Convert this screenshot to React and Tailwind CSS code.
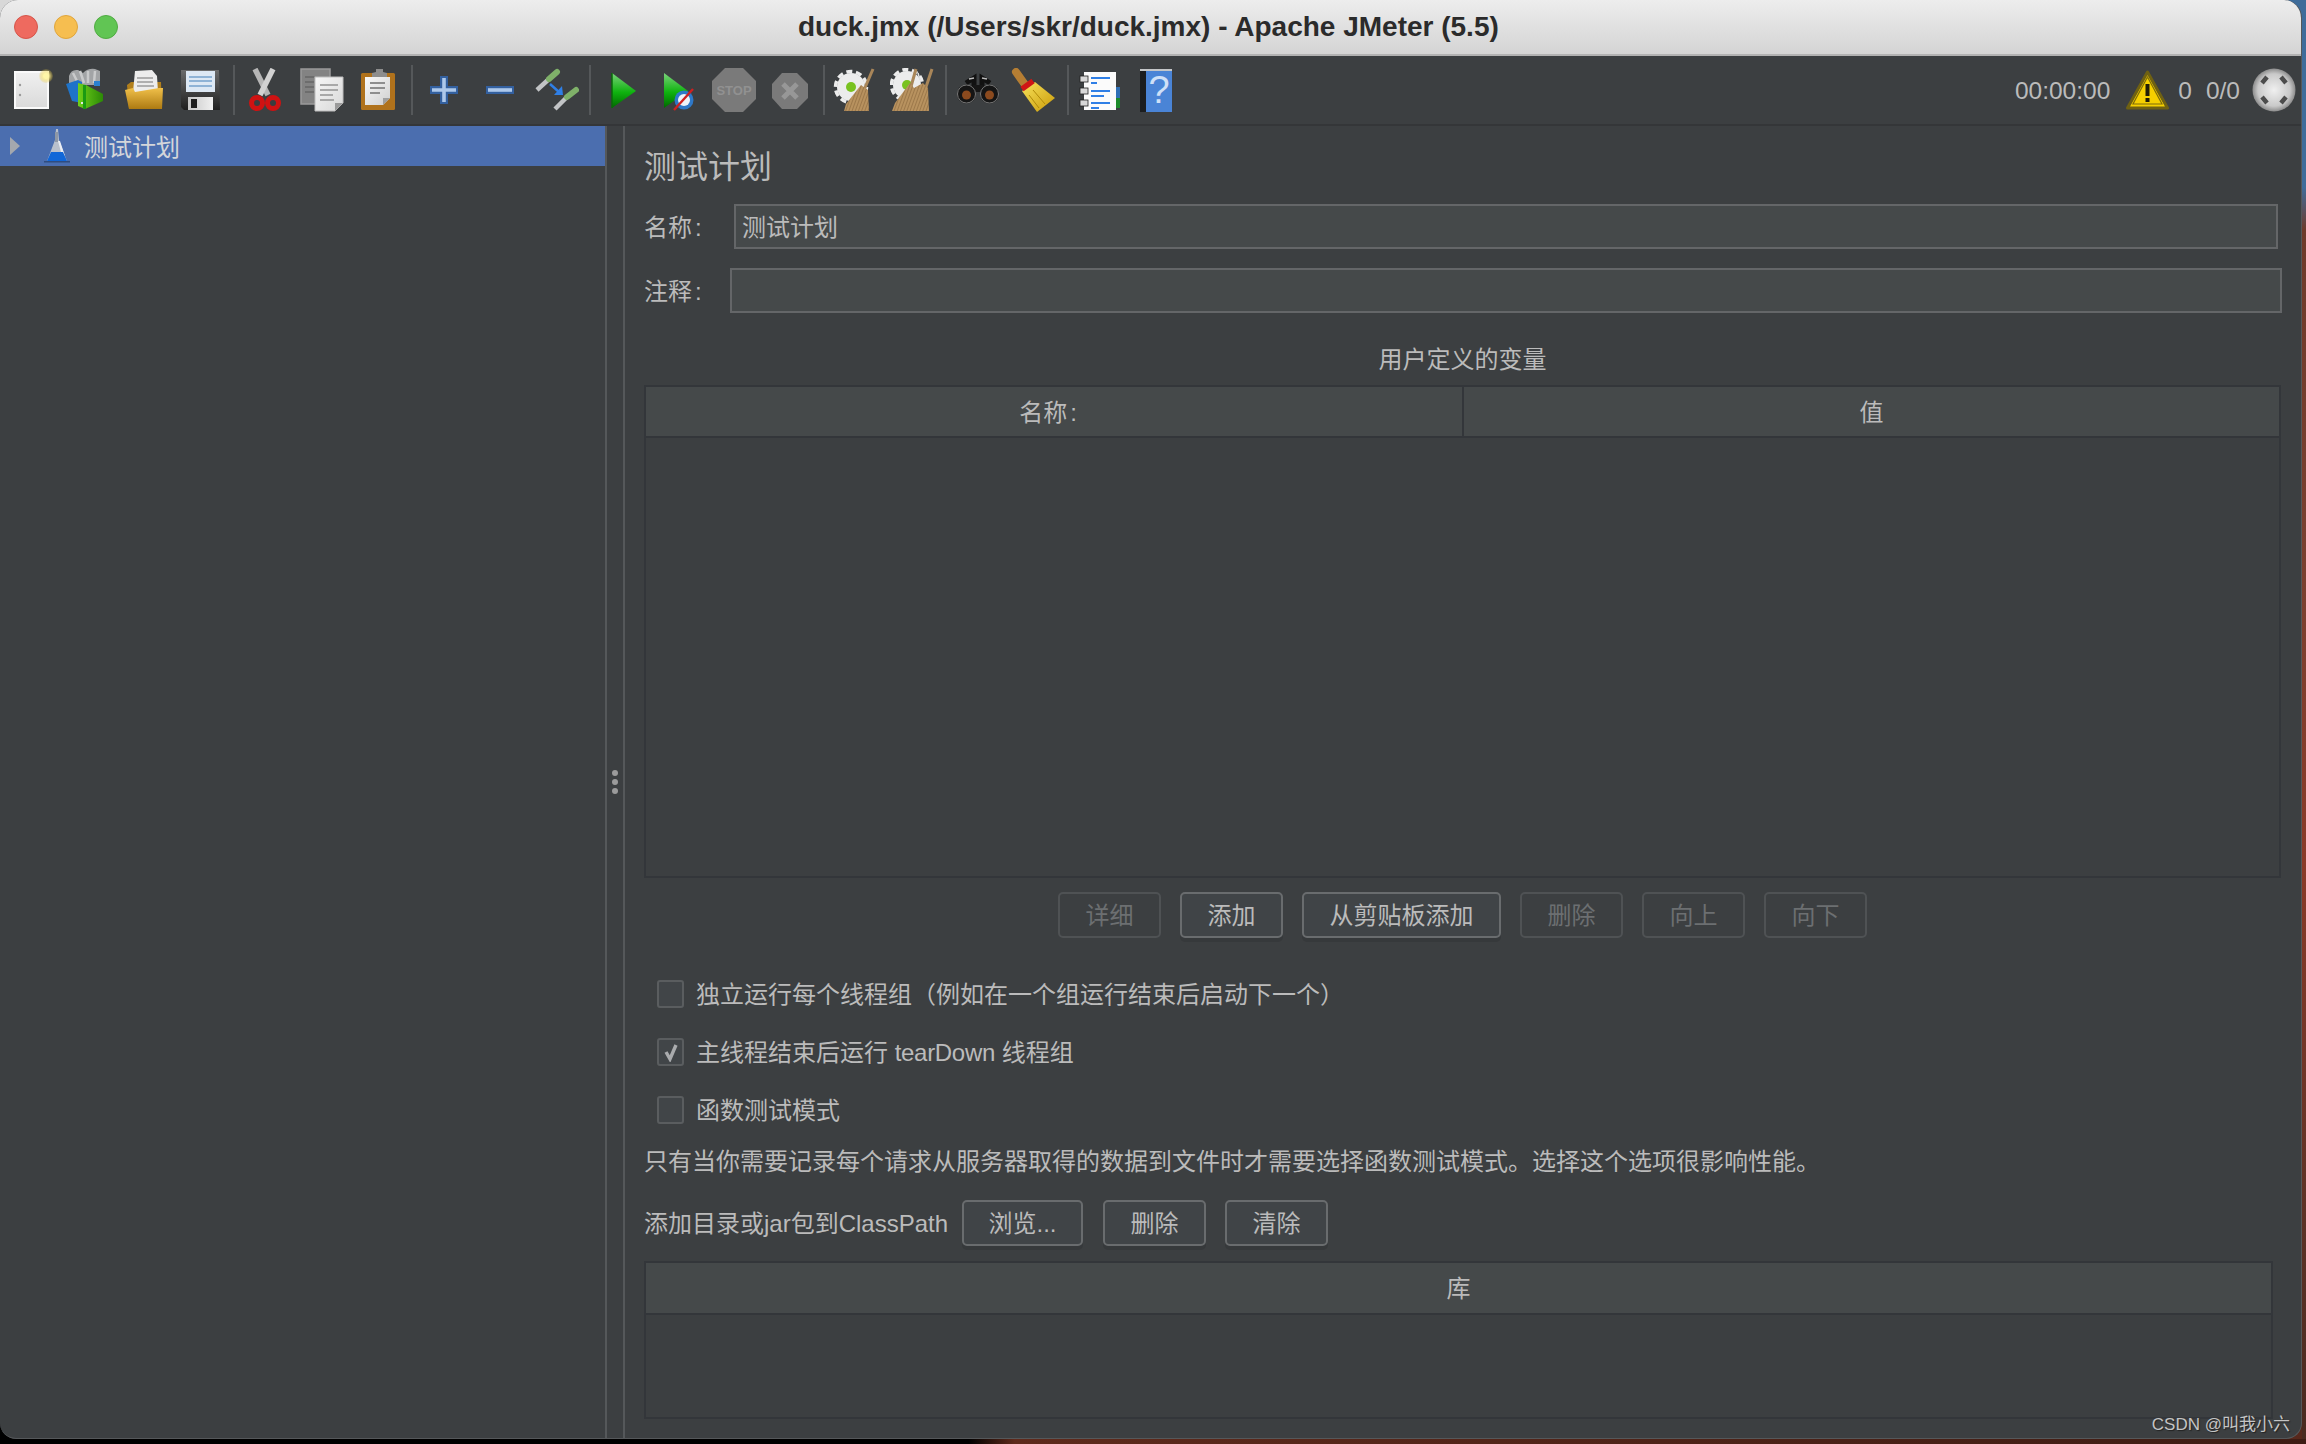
import React from "react";

const Slot = ({ className = "", children }) => (
  <svg viewBox="0 0 44 44" className={`w-11 h-11 shrink-0 ${className}`}>{children}</svg>
);
const Sep = ({ className = "" }) => <div className={`w-[2px] h-[50px] shrink-0 bg-[#55585a] ${className}`} />;

const Grad = ({ id, a, b, c, x2 = 0, y2 = 1 }) => (
  <linearGradient id={id} x1="0" y1="0" x2={x2} y2={y2}>
    <stop offset="0" stopColor={a} />
    {c ? <stop offset="0.55" stopColor={c} /> : null}
    <stop offset="1" stopColor={b} />
  </linearGradient>
);

const IconNew = (p) => (
  <Slot {...p}>
    <defs>
      <Grad id="nw" a="#f0f0f0" b="#dadada" />
      <radialGradient id="glow"><stop offset="0.35" stopColor="#fff6a8" /><stop offset="1" stopColor="#e8c840" stopOpacity="0.15" /></radialGradient>
    </defs>
    <rect x="5" y="4" width="33" height="36" fill="url(#nw)" stroke="#fafafa" strokeWidth="2" />
    <circle cx="10" cy="17" r="1.2" fill="#999" />
    <circle cx="10" cy="27" r="1.2" fill="#999" />
    <circle cx="36" cy="8" r="7" fill="url(#glow)" />
  </Slot>
);

const IconTemplates = (p) => (
  <Slot {...p}>
    <defs>
      <Grad id="tg" a="#6fd11a" b="#2c8a06" x2="1" y2="0" />
    </defs>
    <path d="M5 8 Q7 1 14 2 L19 5 Q24 0 31 1 L36 3 L36 17 L5 17 Z" fill="#a2a4a6" />
    <path d="M9 5 L14 15 M16 3 L20 15 M24 3 L24 15 M31 3 L30 15" stroke="#c9cacb" strokeWidth="2.5" fill="none" />
    <path d="M2 16 L14 12 L18 14 L18 35 L8 33 Z" fill="#1f73c8" />
    <path d="M30 13 L36 13 L36 18 L30 18 Z" fill="#2b80cf" />
    <path d="M14 15 L22 17 L39 26 L39 33 L21 41 L14 38 Z" fill="url(#tg)" />
    <rect x="19" y="17" width="3" height="24" fill="#1a9a12" />
    <rect x="17" y="34" width="2" height="2" fill="#e6e6e6" />
  </Slot>
);

const IconOpen = (p) => (
  <Slot {...p}>
    <defs>
      <Grad id="fo" a="#f0c04a" b="#ad7a12" />
    </defs>
    <path d="M4 17 L8 14 L38 14 L39 40 L6 41 Z" fill="#b17f1c" />
    <path d="M12 3 L29 2 L34 8 L35 24 L10 24 Z" fill="#ececec" />
    <path d="M14 10 L30 10 M14 14 L30 14 M14 18 L31 18" stroke="#9a9a9a" strokeWidth="1.4" />
    <path d="M2 22 L10 20 L12 24 L36 20 L40 20 L39 41 L6 41 Z" fill="url(#fo)" />
  </Slot>
);

const IconSave = (p) => (
  <Slot {...p}>
    <defs>
      <Grad id="sb" a="#6b6b6b" b="#1f1f1f" />
      <Grad id="ss" a="#c8c8c8" b="#f0f0f0" x2="1" y2="0" />
    </defs>
    <path d="M3 2 L41 2 L42 42 L6 42 L3 39 Z" fill="url(#sb)" />
    <rect x="8" y="3" width="29" height="21" fill="#dde8f4" />
    <path d="M11 9 L34 9 M11 13 L34 13 M11 18 L34 18" stroke="#8fb3d6" strokeWidth="1.8" />
    <rect x="10" y="29" width="25" height="13" fill="url(#ss)" />
    <rect x="13" y="31" width="6" height="9" fill="#1e1e1e" />
  </Slot>
);

const IconCut = (p) => (
  <Slot {...p}>
    <path d="M12 1 L25 27" stroke="#b6b6b6" strokeWidth="5.5" fill="none" />
    <path d="M30 1 L17 27" stroke="#d2d2d2" strokeWidth="5.5" fill="none" />
    <circle cx="14" cy="35" r="5.5" fill="#3a3d3f" stroke="#cf1212" strokeWidth="5" />
    <circle cx="30" cy="35" r="5.5" fill="#3a3d3f" stroke="#cf1212" strokeWidth="5" />
  </Slot>
);

const IconCopy = (p) => (
  <Slot {...p}>
    <defs><Grad id="cp" a="#f6f6f6" b="#d8d8d8" x2="1" y2="1" /></defs>
    <rect x="1" y="1" width="29" height="35" fill="#838383" stroke="#9a9a9a" strokeWidth="1.5" />
    <path d="M5 9 L14 9 M5 14 L14 14 M5 19 L14 19 M5 24 L14 24" stroke="#6d6d6d" strokeWidth="2" />
    <path d="M15 9 L43 9 L43 35 L35 43 L15 43 Z" fill="url(#cp)" stroke="#bdbdbd" strokeWidth="1" />
    <path d="M43 35 L35 35 L35 43 Z" fill="#9a9a9a" />
    <path d="M20 17 L38 17 M20 22 L38 22 M20 27 L33 27 M20 32 L34 32" stroke="#a8a8a8" strokeWidth="1.8" />
  </Slot>
);

const IconPaste = (p) => (
  <Slot {...p}>
    <defs><Grad id="pp" a="#f8f8f8" b="#d0d0d0" x2="1" y2="1" /></defs>
    <rect x="5" y="5" width="34" height="37" rx="1.5" fill="#b0721c" />
    <path d="M9 9 L34 9 L34 30 L27 37 L9 37 Z" fill="url(#pp)" />
    <path d="M34 30 L27 30 L27 37 Z" fill="#9f9f9f" />
    <path d="M14 15 L29 15 M14 20 L29 20 M14 25 L24 25" stroke="#8e8e8e" strokeWidth="1.8" />
    <path d="M16 9 L16 5 L20 4 L20 1 L27 1 L27 4 L31 5 L31 9 Z" fill="#8d8d8d" />
  </Slot>
);

const IconPlus = (p) => (
  <Slot {...p}>
    <path d="M8 22 L36 22 M22 8 L22 36" stroke="#33609f" strokeWidth="8" />
    <path d="M10 22 L34 22 M22 10 L22 34" stroke="#adc8ea" strokeWidth="3.6" />
  </Slot>
);

const IconMinus = (p) => (
  <Slot {...p}>
    <path d="M8 22 L36 22" stroke="#33609f" strokeWidth="8" />
    <path d="M10 22 L34 22" stroke="#adc8ea" strokeWidth="3.6" />
  </Slot>
);

const IconToggle = (p) => (
  <Slot {...p}>
    <path d="M2 22 L14 11" stroke="#c2c4c6" strokeWidth="4.5" />
    <path d="M14 11 L22 4" stroke="#7fb169" strokeWidth="6" strokeLinecap="round" />
    <path d="M20 41 L32 29" stroke="#c2c4c6" strokeWidth="4.5" />
    <path d="M32 29 L41 22" stroke="#7fb169" strokeWidth="6" strokeLinecap="round" />
    <path d="M15 16 L24 24" stroke="#2f7fe6" strokeWidth="2.5" />
    <path d="M28 27 L19 27 L27 18 Z" fill="#2f7fe6" />
  </Slot>
);

const IconPlay = (p) => (
  <Slot {...p}>
    <defs><Grad id="pl" a="#7ad27a" c="#0fb30f" b="#006800" /></defs>
    <path d="M10 5 L34 23 L10 40 Z" fill="url(#pl)" />
    <path d="M10 5 L10 40" stroke="#0a6a0a" strokeWidth="1.5" />
  </Slot>
);

const IconPlayNoTimer = (p) => (
  <Slot {...p}>
    <defs><Grad id="pn" a="#7ad27a" c="#0fb30f" b="#006800" /></defs>
    <path d="M7 5 L31 23 L7 40 Z" fill="url(#pn)" />
    <circle cx="27" cy="32" r="9.5" fill="#2e78c8" />
    <circle cx="27" cy="32" r="6" fill="#eef3fa" />
    <path d="M17 42 L36 21" stroke="#cf2020" strokeWidth="2.4" />
  </Slot>
);

const IconStop = (p) => (
  <Slot {...p}>
    <path d="M13 0 L31 0 L44 13 L44 31 L31 44 L13 44 L0 31 L0 13 Z" fill="#7a7a7a" />
    <text x="22" y="27" textAnchor="middle" fontSize="13" fontWeight="700" fill="#919191" className="font-['Liberation_Sans']">STOP</text>
  </Slot>
);

const IconShutdown = (p) => (
  <Slot {...p}>
    <path d="M14 5 L29 5 L40 16 L40 30 L29 41 L14 41 L4 30 L4 16 Z" fill="#7a7a7a" />
    <path d="M15 16 L29 30 M29 16 L15 30" stroke="#979797" strokeWidth="5" />
  </Slot>
);

const Gear = ({ cx, cy }) => (
  <g>
    <circle cx={cx} cy={cy} r="14" fill="#ececec" />
    <circle cx={cx} cy={cy} r="15.5" fill="none" stroke="#ececec" strokeWidth="3.5" strokeDasharray="6 3.7" />
    <circle cx={cx} cy={cy} r="5" fill="#79c21f" />
  </g>
);
const Bristle = ({ d, id }) => (
  <g>
    <defs>
      <pattern id={id} width="3" height="3" patternUnits="userSpaceOnUse" patternTransform="rotate(20)">
        <rect width="3" height="3" fill="#b8925f" />
        <rect width="1" height="3" fill="#9c784a" />
      </pattern>
    </defs>
    <path d={d} fill={`url(#${id})`} />
  </g>
);

const IconClear = (p) => (
  <Slot {...p}>
    <Gear cx={19} cy={19} />
    <path d="M41 1 L32 22" stroke="#a98659" strokeWidth="3" />
    <Bristle id="b1" d="M29 17 L36 22 L37 43 L12 43 L14 36 Z" />
  </Slot>
);

const IconClearAll = (p) => (
  <Slot {...p}>
    <Gear cx={17} cy={17} />
    <path d="M26 1 L20 22 M42 1 L35 22" stroke="#a98659" strokeWidth="3" />
    <Bristle id="b2" d="M20 15 L24 20 L33 15 L38 20 L39 43 L2 43 L5 35 Z" />
    <path d="M28 5 L30 12" stroke="#e0e0e0" strokeWidth="1.5" />
  </Slot>
);

const IconBinoculars = (p) => (
  <Slot {...p}>
    <path d="M10 15 L18 10 L18 24 M34 15 L26 10 L26 24" stroke="#111" strokeWidth="5" fill="none" />
    <rect x="17" y="17" width="10" height="7" fill="#161616" />
    <path d="M13 11 L18 10 M26 10 L31 11" stroke="#b9b9b9" strokeWidth="1.5" />
    <circle cx="10.5" cy="26" r="9.5" fill="#151515" />
    <circle cx="33.5" cy="26" r="9.5" fill="#151515" />
    <circle cx="10.5" cy="27" r="4.5" fill="#8b4a1e" />
    <circle cx="33.5" cy="27" r="4.5" fill="#8b4a1e" />
    <circle cx="10.5" cy="26" r="9" fill="none" stroke="#777" strokeWidth="1" />
    <circle cx="33.5" cy="26" r="9" fill="none" stroke="#777" strokeWidth="1" />
  </Slot>
);

const IconBroom = (p) => (
  <Slot {...p}>
    <defs><Grad id="br" a="#f8e25a" b="#c99a08" x2="1" y2="1" /></defs>
    <path d="M5 4 L15 18" stroke="#b57e33" strokeWidth="8" strokeLinecap="round" />
    <path d="M11 23 L24 14 L44 30 L26 44 Z" fill="url(#br)" />
    <path d="M22 22 L34 36 M18 27 L28 40" stroke="#b08a08" strokeWidth="1" />
    <path d="M11 21 L22 13" stroke="#cf1616" strokeWidth="5.5" />
  </Slot>
);

const IconList = (p) => (
  <Slot {...p}>
    <rect x="36" y="19" width="7" height="11" fill="#2f6fb5" />
    <rect x="36" y="30" width="7" height="10" fill="#1d8a2a" />
    <rect x="7" y="4" width="32" height="38" fill="#fbfbfb" />
    <path d="M14 10 L33 10 M14 23 L33 23 M14 35 L33 35" stroke="#2f7fe6" strokeWidth="1.8" />
    <path d="M14 15 L20 15 M14 28 L27 28 M14 40 L22 40" stroke="#2f7fe6" strokeWidth="1.8" />
    <rect x="3" y="8" width="8" height="6" fill="#d8d8d8" stroke="#222" strokeWidth="0.8" />
    <rect x="3" y="20" width="8" height="6" fill="#d8d8d8" stroke="#222" strokeWidth="0.8" />
    <rect x="3" y="32" width="8" height="6" fill="#d8d8d8" stroke="#222" strokeWidth="0.8" />
  </Slot>
);

const IconHelp = (p) => (
  <Slot {...p}>
    <rect x="6" y="1" width="32" height="43" fill="#4a84d6" />
    <rect x="6" y="1" width="6" height="43" fill="#1b1d1f" />
    <rect x="6" y="1" width="32" height="2" fill="#c4c6c8" />
    <text x="25" y="35" textAnchor="middle" fontSize="38" fill="#cfe0f7" className="font-['Liberation_Sans']">?</text>
  </Slot>
);

const IconWarn = () => (
  <svg viewBox="0 0 43 40" className="w-[43px] h-10 shrink-0 ml-4">
    <path d="M21.5 2 L41.5 38 L1.5 38 Z" fill="#f5d000" stroke="#6f6112" strokeWidth="3" strokeLinejoin="round" />
    <path d="M21.5 7 L36 34 L7 34 Z" fill="none" stroke="#2f2a10" strokeWidth="1.2" opacity="0.6" />
    <rect x="19.5" y="14" width="4" height="12" fill="#1f1c08" />
    <rect x="19.5" y="28" width="4" height="4" fill="#1f1c08" />
  </svg>
);

const IconGlobe = () => (
  <svg viewBox="0 0 44 44" className="w-11 h-11 shrink-0 ml-3">
    <defs>
      <radialGradient id="gl"><stop offset="0" stopColor="#f0f0f0" /><stop offset="0.75" stopColor="#c9c9c9" /><stop offset="1" stopColor="#8c8c8c" /></radialGradient>
    </defs>
    <circle cx="22" cy="22" r="21.5" fill="url(#gl)" />
    <path d="M10 15 L15 9 M29 9 L34 15 M10 29 L15 35 M29 35 L34 29" stroke="#4c4c4c" strokeWidth="4.5" />
  </svg>
);

const IconFlask = () => (
  <svg viewBox="0 0 28 36" className="w-7 h-9 shrink-0 ml-[23px]">
    <path d="M13 1 L15 1 L16 12 L24 33 L4 33 L12 12 Z" fill="#b9c0cc" />
    <path d="M12 4 L15 4 L15 14 L12 14 Z" fill="#8f98a6" />
    <path d="M15 13 L17 13 L22 28 L18 24 Z" fill="#e9edf4" />
    <path d="M8 24 L20 24 L24 33 L4 33 Z" fill="#1167d8" />
    <rect x="1" y="33" width="26" height="1.5" fill="#2f4c7f" />
  </svg>
);

const Btn = ({ w, off, children, className = "" }) => (
  <button
    className={
      off
        ? `${w} h-[46px] pt-[1px] shrink-0 rounded-[5px] border-2 border-[#4f5254] text-[#6c6f71] text-[24px] leading-none ${className}`
        : `${w} h-[46px] pt-[1px] shrink-0 rounded-[5px] border-2 border-[#696c6e] bg-[#404447] text-[#bbbbbb] text-[24px] leading-none shadow-[0_4px_0_#36393b] ${className}`
    }
  >
    {children}
  </button>
);

const Check = ({ on, className = "", children }) => (
  <div className={`flex items-center pl-[13px] h-7 ${className}`}>
    <div className="w-[27px] h-7 shrink-0 rounded-[3px] border-2 border-[#5a5d5f] bg-[#414548] flex items-center justify-center">
      {on ? (
        <svg viewBox="0 0 20 20" className="w-5 h-5">
          <path d="M5 10 L9 17 L15 3" stroke="#a9abad" strokeWidth="3.4" fill="none" />
        </svg>
      ) : null}
    </div>
    <span className="ml-3 pt-[2px] text-[24px] leading-[30px] text-[#bbbbbb] whitespace-nowrap">{children}</span>
  </div>
);

export default function App() {
  return (
    <div
      lang="zh-CN"
      className="w-[2306px] h-[1444px] overflow-hidden flex flex-col bg-[linear-gradient(to_right,#000000_42%,#5e2a1c_44%,#3e1c14_100%)] font-['Liberation_Sans','Noto_Sans_CJK_SC',sans-serif]"
    >
      <div className="flex h-[1439px] shrink-0 bg-[conic-gradient(#3f6c9a_25%,#57281c_25%_50%,#000000_50%_75%,#d8d8d8_75%)]">
        <div className="relative w-[2302px] h-full rounded-t-[18px] rounded-b-[16px] overflow-hidden flex flex-col bg-[#3c3f41] border-r border-b border-[#55585a]">
          {/* title bar */}
          <div className="h-14 shrink-0 flex items-center pl-[14px] border-b-2 border-[#b2b2b2] bg-[linear-gradient(to_bottom,#ededed,#d4d4d4)]">
            <div className="w-6 h-6 rounded-full bg-[#ee6a5f] border border-[#d5554a]" />
            <div className="w-6 h-6 rounded-full bg-[#f6be50] border border-[#dfa53c] ml-4" />
            <div className="w-6 h-6 rounded-full bg-[#61c554] border border-[#50ab43] ml-4" />
            <div className="ml-[680px] text-[28px] font-bold text-[#2b2b2b] whitespace-nowrap">
              duck.jmx (/Users/skr/duck.jmx) - Apache JMeter (5.5)
            </div>
          </div>
          {/* toolbar */}
          <div className="h-[70px] shrink-0 flex items-center pl-[10px] pr-[5px] border-b-2 border-[#343638]">
            <IconNew />
            <IconTemplates className="ml-[10px]" />
            <IconOpen className="ml-[15px]" />
            <IconSave className="ml-[11px]" />
            <Sep className="ml-[11px]" />
            <IconCut className="ml-2" />
            <IconCopy className="ml-[13px]" />
            <IconPaste className="ml-3" />
            <Sep className="ml-[11px]" />
            <IconPlus className="ml-[9px]" />
            <IconMinus className="ml-3" />
            <IconToggle className="ml-[13px]" />
            <Sep className="ml-[10px]" />
            <IconPlay className="ml-[11px]" />
            <IconPlayNoTimer className="ml-[11px]" />
            <IconStop className="ml-[11px]" />
            <IconShutdown className="ml-3" />
            <Sep className="ml-[11px]" />
            <IconClear className="ml-[7px]" />
            <IconClearAll className="ml-[14px]" />
            <Sep className="ml-[11px]" />
            <IconBinoculars className="ml-[9px]" />
            <IconBroom className="ml-[11px]" />
            <Sep className="ml-3" />
            <IconList className="ml-2" />
            <IconHelp className="ml-[13px]" />
            <div className="ml-auto flex items-center text-[24.5px] text-[#bbbbbb]">
              <span className="pt-[2px]">00:00:00</span>
              <IconWarn />
              <span className="ml-[9px] pt-[2px]">0</span>
              <span className="ml-[14px] pt-[2px]">0/0</span>
              <IconGlobe />
            </div>
          </div>
          {/* body */}
          <div className="flex flex-1 min-h-0">
            <div className="w-[607px] shrink-0 border-r-2 border-[#55585a]">
              <div className="h-10 flex items-center pl-[10px] bg-[#4b6eaf]">
                <svg viewBox="0 0 10 18" className="w-[10px] h-[18px] shrink-0">
                  <path d="M0 0 L10 9 L0 18 Z" fill="#a4a8ae" />
                </svg>
                <IconFlask />
                <span className="ml-[13px] pt-[3px] text-[24px] text-[#d4d6da] leading-none">测试计划</span>
              </div>
            </div>
            <div className="w-[18px] shrink-0 border-r-2 border-[#55585a] flex flex-col items-center justify-center gap-[3px]">
              <div className="w-[6px] h-[6px] rounded-full bg-[#9b9b9b]" />
              <div className="w-[6px] h-[6px] rounded-full bg-[#9b9b9b]" />
              <div className="w-[6px] h-[6px] rounded-full bg-[#9b9b9b]" />
            </div>
            <div className="flex-1 min-w-0 pl-[19px] text-[#bbbbbb] text-[24px]">
              <div className="mt-[21px] h-[39px] text-[32px] leading-10">测试计划</div>
              <div className="mt-[18px] flex items-center h-[45px]">
                <span className="w-[90px] shrink-0 pt-[2px]">名称<span className="ml-[3px]">:</span></span>
                <div className="w-[1544px] h-[45px] border-2 border-[#646668] bg-[#45494a] pl-[6px] pt-[2px] flex items-center">测试计划</div>
              </div>
              <div className="mt-[19px] flex items-center h-[45px]">
                <span className="w-[86px] shrink-0 pt-[2px]">注释<span className="ml-[3px]">:</span></span>
                <div className="w-[1552px] h-[45px] border-2 border-[#646668] bg-[#45494a]" />
              </div>
              <div className="mt-[32px] w-[1637px] h-[29px] leading-[30px] text-center">用户定义的变量</div>
              <div className="mt-[11px] w-[1637px] h-[493px] border-2 border-[#33363a]">
                <div className="flex h-[51px] bg-[#45494a] border-b-2 border-[#33363a]">
                  <div className="w-[818px] shrink-0 pr-[12px] pt-[2px] border-r-2 border-[#33363a] flex items-center justify-center">名称<span className="ml-[3px]">:</span></div>
                  <div className="flex-1 pt-[2px] flex items-center justify-center">值</div>
                </div>
              </div>
              <div className="mt-[14px] w-[1637px] flex justify-center gap-[19px]">
                <Btn w="w-[103px]" off>详细</Btn>
                <Btn w="w-[103px]">添加</Btn>
                <Btn w="w-[199px]">从剪贴板添加</Btn>
                <Btn w="w-[103px]" off>删除</Btn>
                <Btn w="w-[103px]" off>向上</Btn>
                <Btn w="w-[103px]" off>向下</Btn>
              </div>
              <Check className="mt-[42px]">独立运行每个线程组（例如在一个组运行结束后启动下一个）</Check>
              <Check on className="mt-[30px]">主线程结束后运行 <span className="tracking-[-0.3px]">tearDown</span> 线程组</Check>
              <Check className="mt-[30px]">函数测试模式</Check>
              <div className="mt-[23px] h-[30px] leading-[30px] whitespace-nowrap">
                只有当你需要记录每个请求从服务器取得的数据到文件时才需要选择函数测试模式。选择这个选项很影响性能。
              </div>
              <div className="mt-[23px] flex items-center">
                <span className="w-[318px] shrink-0 pt-[2px] whitespace-nowrap">添加目录或jar包到ClassPath</span>
                <Btn w="w-[121px]">浏览...</Btn>
                <Btn w="w-[103px]" className="ml-5">删除</Btn>
                <Btn w="w-[103px]" className="ml-[19px]">清除</Btn>
              </div>
              <div className="mt-[15px] w-[1629px] h-[158px] border-2 border-[#33363a]">
                <div className="h-[52px] pt-[2px] bg-[#45494a] border-b-2 border-[#33363a] flex items-center justify-center">库</div>
              </div>
            </div>
          </div>
          {/* watermark */}
          <div className="absolute right-[11px] bottom-[1px] text-[17px] leading-[24px] text-[#c4c4c4] whitespace-nowrap [text-shadow:1px_1px_1px_#222]">
            CSDN @叫我小六
          </div>
        </div>
        <div className="w-[4px] h-full bg-[linear-gradient(to_bottom,#3f6c9a_0%,#3f6c9a_13%,#6e3a2a_16%,#7a4030_40%,#8a3a28_60%,#5c3226_85%,#4a2a20_100%)]" />
      </div>
      <div className="h-[5px] shrink-0" />
    </div>
  );
}
